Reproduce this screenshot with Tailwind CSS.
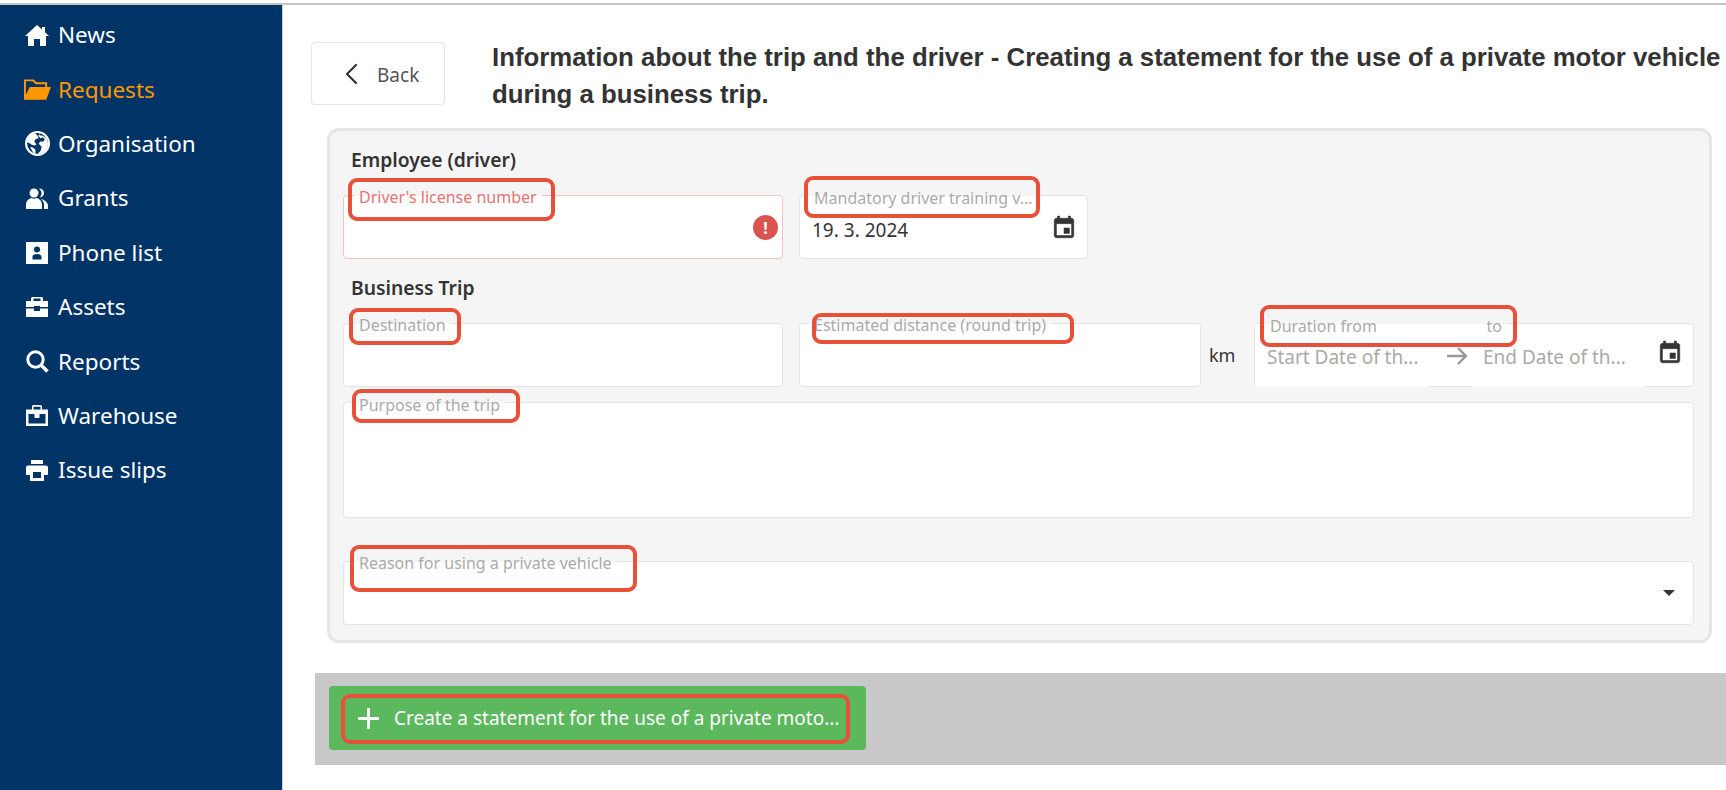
<!DOCTYPE html>
<html lang="en">
<head>
<meta charset="UTF-8">
<title>Creating a statement</title>
<script src="https://cdn.jsdelivr.net/npm/@tailwindcss/browser@4"></script>
</head>
<body class="bg-white h-[790px] w-[1726px] overflow-hidden font-['Noto_Sans',sans-serif] text-[#333]">
<div class="h-[3px] bg-white"></div>
<div class="h-[2px] bg-[#c4c4c4]"></div>
<div class="flex h-[785px]">
  <!-- sidebar -->
  <nav class="w-[283px] shrink-0 bg-[#003366] border-r border-[#d0d0d0] pt-[3px] text-white text-[22.500px]">
    <a class="flex items-center h-[54.400px] pl-[24px] gap-[8px]">
      <span class="w-[26px] flex justify-center">
        <svg class="w-[24px] h-[21px]" viewBox="0 0 24 21" fill="currentColor"><path d="M12 0l5 4.500V2h3v5.200L24 11h-3v10h-6v-7H9v7H3V11H0z"/></svg>
      </span>
      <span>News</span>
    </a>
    <a class="flex items-center h-[54.400px] pl-[24px] gap-[8px] text-[#ff9800]">
      <span class="w-[26px] flex justify-center">
        <svg class="w-[27px] h-[21px] shrink-0" viewBox="0 0 28 21" fill="currentColor"><path d="M0 0h10l3 3h11v5h-2V5H12L9 2H2v14L6 8h22l-5 13H0z"/></svg>
      </span>
      <span>Requests</span>
    </a>
    <a class="flex items-center h-[54.400px] pl-[24px] gap-[8px]">
      <span class="w-[26px] flex justify-center">
        <svg class="w-[25px] h-[25px]" viewBox="0 0 24 24" fill="currentColor"><circle cx="12" cy="12" r="11" fill="none" stroke="currentColor" stroke-width="2"/><path d="M9 2C5 3 2 7 2 11c2 0 3 1 4 2l3 1 2-1-2-3 1-2 3-1-1-3z"/><path d="M14 2l-1 3 2 2 2-1 2 2-1 2-3 0-2 2 3 3-1 4-3 3c5 0 10-4 10-10 0-4-3-8-8-8z"/><path d="M5 15l3 1 2 2 0 4c-2-1-4-4-5-7z"/></svg>
      </span>
      <span>Organisation</span>
    </a>
    <a class="flex items-center h-[54.400px] pl-[24px] gap-[8px]">
      <span class="w-[26px] flex justify-center">
        <svg class="w-[22px] h-[21px]" viewBox="0 0 22 21" fill="currentColor"><circle cx="8" cy="5" r="4.500"/><path d="M0 21v-4c0-4 3-7 6-7 1 1 3 1 4 0 3 0 6 3 6 7v4z"/><path d="M13 .5a4.500 4.500 0 0 1 1 9c1-1.500 1.500-3 1.500-4.500S14.500 2 13 .5z"/><path d="M15 11c3 .5 7 3 7 7v3h-4v-4c0-2.500-1-4.500-3-6z"/></svg>
      </span>
      <span>Grants</span>
    </a>
    <a class="flex items-center h-[54.400px] pl-[24px] gap-[8px]">
      <span class="w-[26px] flex justify-center">
        <svg class="w-[22px] h-[22px]" viewBox="0 0 22 22" fill="currentColor" fill-rule="evenodd"><path d="M0 0h22v22H0zM11 4.500a3 3 0 1 0 0 6 3 3 0 0 0 0-6zM6.500 17.500h9v-3c0-1.500-2-2.500-4.500-2.500s-4.500 1-4.500 2.500z"/></svg>
      </span>
      <span>Phone list</span>
    </a>
    <a class="flex items-center h-[54.400px] pl-[24px] gap-[8px]">
      <span class="w-[26px] flex justify-center">
        <svg class="w-[22px] h-[20px]" viewBox="0 0 22 20" fill="currentColor" fill-rule="evenodd"><path d="M6 0h10l1 1v3h5v6h-8V9H8v1H0V4h5V1zM7.500 1.500V4h7V1.500zM0 11.500h8V14h6v-2.500h8V20H0z"/></svg>
      </span>
      <span>Assets</span>
    </a>
    <a class="flex items-center h-[54.400px] pl-[24px] gap-[8px]">
      <span class="w-[26px] flex justify-center">
        <svg class="w-[23px] h-[23px]" viewBox="0 0 23 23" fill="none" stroke="currentColor"><circle cx="9.500" cy="9.500" r="7.700" stroke-width="3"/><path d="M15 15l6.500 6.500" stroke-width="3.600"/></svg>
      </span>
      <span>Reports</span>
    </a>
    <a class="flex items-center h-[54.400px] pl-[24px] gap-[8px]">
      <span class="w-[26px] flex justify-center">
        <svg class="w-[22px] h-[21px]" viewBox="0 0 22 21" fill="currentColor"><path d="M6 5V1l1-1h8l1 1v4h-1.500V1.800h-7V5z"/><path fill-rule="evenodd" d="M0 4.500h22V21H0zM2.500 9v9.500h17V9z"/><path d="M8.500 9h5v4h-5z"/></svg>
      </span>
      <span>Warehouse</span>
    </a>
    <a class="flex items-center h-[54.400px] pl-[24px] gap-[8px]">
      <span class="w-[26px] flex justify-center">
        <svg class="w-[22px] h-[21px]" viewBox="0 0 22 21" fill="currentColor" fill-rule="evenodd"><path d="M5 0h12v4H5zM2 5.500h18a2 2 0 0 1 2 2V15h-4v6H4v-6H0V7.500a2 2 0 0 1 2-2zM7 12v6h8v-6z"/></svg>
      </span>
      <span>Issue slips</span>
    </a>
  </nav>

  <!-- main -->
  <main class="flex-1 min-w-0 overflow-hidden">
    <div class="flex items-start pl-[28px] pt-[37px] h-[123px]">
      <button class="shrink-0 w-[134px] h-[63px] rounded-[4px] border border-[#e4e4e4] bg-white flex items-center pl-[32px] gap-[19px] text-[19px] text-[#555]">
        <svg class="w-[14px] h-[22px]" viewBox="0 0 14 22" fill="none" stroke="#333" stroke-width="2.200" stroke-linecap="round" stroke-linejoin="round"><path d="M12 2L3 11l9 9"/></svg>
        <span class="pt-[3px]">Back</span>
      </button>
      <h1 class="ml-[47px] -mt-[3px] w-[1270px] shrink-0 font-['Liberation_Sans',sans-serif] font-bold text-[25.800px] leading-[37px] text-[#333]">Information about the trip and the driver - Creating a statement for the use of a private motor vehicle during a business trip.</h1>
    </div>

    <section class="ml-[44px] w-[1385px] border-[3px] border-[#e6e6e6] rounded-[12px] bg-[#f5f5f5] pt-[17px] pb-[15px] pl-[13px] pr-[15px]">
      <h2 class="pl-[8px] h-[24px] leading-[24px] text-[19.300px] font-semibold text-[#333]">Employee (driver)</h2>
      <div class="flex gap-[16px] mt-[23px]">
        <div class="relative w-[440px] h-[64px] rounded-[4px] border border-[#f5c2c2] bg-white">
          <label class="absolute left-[10px] -top-[9px] px-[5px] h-[20px] leading-[20px] text-[16px] text-[#e57373] bg-[linear-gradient(#f5f5f5_9px,white_9px)]">Driver's license number</label>
          <div class="absolute left-[4px] -top-[18px] w-[207px] h-[43px] border-4 border-[#e8503a] rounded-[9px] pointer-events-none"></div>
          <div class="absolute right-[4px] top-[19px] w-[25px] h-[25px] rounded-full bg-[#d9534f] text-white text-[16px] font-bold flex items-center justify-center">!</div>
        </div>
        <div class="relative w-[289px] h-[64px] rounded-[4px] border border-[#e4e4e4] bg-white">
          <label class="absolute left-[9px] -top-[8px] px-[5px] h-[20px] leading-[20px] text-[16px] text-[#aaa] whitespace-nowrap bg-[linear-gradient(#f5f5f5_8px,white_8px)]">Mandatory driver training v...</label>
          <div class="absolute left-[4px] -top-[20px] w-[236px] h-[42px] border-4 border-[#e8503a] rounded-[9px] pointer-events-none"></div>
          <div class="flex items-center justify-between h-full pl-[12px] pr-[10px] pt-[6px] text-[19px] text-[#333]">
            <span>19. 3. 2024</span>
            <svg class="w-[26px] h-[26px] -mt-[5px]" viewBox="0 0 24 24" fill="#333" stroke="#333" stroke-width=".5"><path d="M17 12h-5v5h5v-5zM16 1v2H8V1H6v2H5c-1.110 0-1.990.9-1.990 2L3 19c0 1.100.89 2 2 2h14c1.100 0 2-.9 2-2V5c0-1.100-.9-2-2-2h-1V1h-2zm3 18H5V8h14v11z"/></svg>
          </div>
        </div>
      </div>

      <h2 class="pl-[8px] mt-[17px] h-[24px] leading-[24px] text-[19.300px] font-semibold text-[#333]">Business Trip</h2>
      <div class="flex mt-[23px]">
        <div class="relative w-[440px] h-[64px] rounded-[4px] border border-[#e4e4e4] bg-white">
          <label class="absolute left-[10px] -top-[9px] px-[5px] h-[20px] leading-[20px] text-[16px] text-[#aaa] bg-[linear-gradient(#f5f5f5_9px,white_9px)]">Destination</label>
          <div class="absolute left-[5px] -top-[16px] w-[112px] h-[37px] border-4 border-[#e8503a] rounded-[9px] pointer-events-none"></div>
        </div>
        <div class="relative ml-[16px] w-[402px] h-[64px] rounded-[4px] border border-[#e4e4e4] bg-white">
          <label class="absolute left-[9px] -top-[9px] px-[5px] h-[20px] leading-[20px] text-[16px] text-[#aaa] bg-[linear-gradient(#f5f5f5_9px,white_9px)]">Estimated distance (round trip)</label>
          <div class="absolute left-[12px] -top-[11px] w-[262px] h-[31px] border-4 border-[#e8503a] rounded-[9px] pointer-events-none"></div>
        </div>
        <div class="w-[53px] h-[64px] pl-[8px] flex items-center text-[18px] text-[#333]">km</div>
        <div class="relative flex w-[440px] h-[64px] rounded-[4px] border border-[#e4e4e4] bg-white text-[19px] text-[#aaa]">
          <label class="absolute left-[10px] -top-[8px] px-[5px] w-[242px] flex justify-between h-[20px] leading-[20px] text-[16px] bg-[linear-gradient(#f5f5f5_8px,white_8px)]"><span>Duration from</span><span>to</span></label>
          <div class="absolute left-[5px] -top-[19px] w-[257px] h-[42px] border-4 border-[#e8503a] rounded-[9px] z-10 pointer-events-none"></div>
          <div class="w-[174px] h-[63px] -mb-[2px] bg-white pl-[12px] pt-[19px] leading-[28px] whitespace-nowrap">Start Date of th...</div>
          <div class="w-[43px] pl-[17px] pt-[21px]">
            <svg class="w-[22px] h-[22px]" viewBox="0 0 22 22" fill="none" stroke="#999" stroke-width="2.400"><path d="M1 11h19M12 3l8 8-8 8"/></svg>
          </div>
          <div class="w-[173px] h-[63px] -mb-[2px] bg-white pl-[11px] pt-[19px] leading-[28px] whitespace-nowrap">End Date of th...</div>
          <svg class="ml-[12px] mt-[16px] w-[26px] h-[26px]" viewBox="0 0 24 24" fill="#333" stroke="#333" stroke-width=".5"><path d="M17 12h-5v5h5v-5zM16 1v2H8V1H6v2H5c-1.110 0-1.990.9-1.990 2L3 19c0 1.100.89 2 2 2h14c1.100 0 2-.9 2-2V5c0-1.100-.9-2-2-2h-1V1h-2zm3 18H5V8h14v11z"/></svg>
        </div>
      </div>

      <div class="relative mt-[15px] h-[116px] rounded-[4px] border border-[#e4e4e4] bg-white">
        <label class="absolute left-[10px] -top-[8px] px-[5px] h-[20px] leading-[20px] text-[16px] text-[#aaa] bg-[linear-gradient(#f5f5f5_8px,white_8px)]">Purpose of the trip</label>
        <div class="absolute left-[8px] -top-[14px] w-[168px] h-[34px] border-4 border-[#e8503a] rounded-[9px] pointer-events-none"></div>
      </div>

      <div class="relative mt-[43px] h-[64px] rounded-[4px] border border-[#e4e4e4] bg-white">
        <label class="absolute left-[10px] -top-[9px] px-[5px] h-[20px] leading-[20px] text-[16px] text-[#aaa] bg-[linear-gradient(#f5f5f5_9px,white_9px)]">Reason for using a private vehicle</label>
        <div class="absolute left-[6px] -top-[17px] w-[287px] h-[47px] border-4 border-[#e8503a] rounded-[9px] pointer-events-none"></div>
        <div class="absolute right-[18px] top-[28px] w-0 h-0 border-x-[6px] border-x-transparent border-t-[6px] border-t-[#333]"></div>
      </div>
    </section>

    <div class="ml-[32px] mt-[30px] h-[92px] bg-[#c8c8c8] pl-[14px] pt-[13px]">
      <button class="relative w-[537px] h-[64px] rounded-[4px] bg-[#5cb85c] text-white text-[19px] flex items-center pl-[29px] gap-[15px]">
        <svg class="w-[21px] h-[21px] shrink-0" viewBox="0 0 21 21" fill="none" stroke="white" stroke-width="3"><path d="M10.500 0v21M0 10.500h21"/></svg>
        <span class="whitespace-nowrap text-left">Create a statement for the use of a private moto...</span>
        <span class="absolute left-[12px] top-[8px] w-[509px] h-[50px] border-4 border-[#e8503a] rounded-[9px] pointer-events-none"></span>
      </button>
    </div>
  </main>
</div>
</body>
</html>
